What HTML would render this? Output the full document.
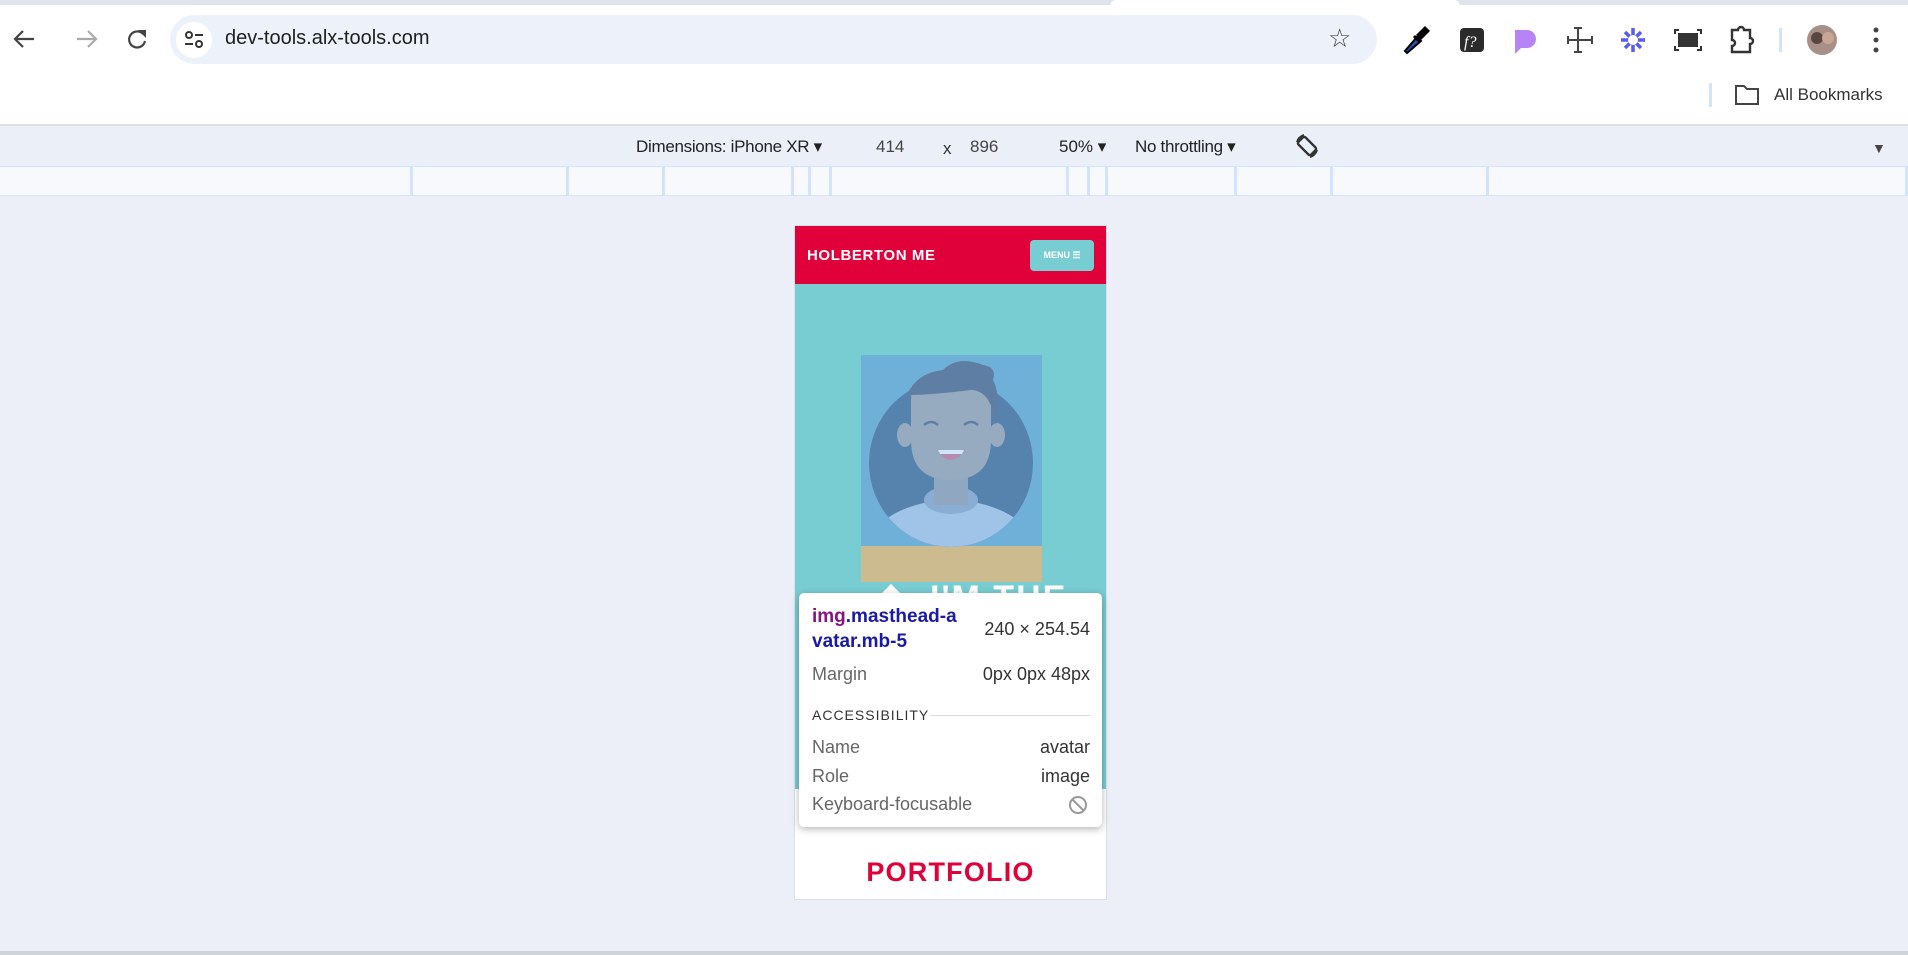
<!DOCTYPE html>
<html><head><meta charset="utf-8"><style>
*{margin:0;padding:0;box-sizing:border-box}
body{width:1908px;height:955px;background:#eceff7;font-family:"Liberation Sans",sans-serif;position:relative;overflow:hidden}
.abs{position:absolute}
</style></head><body>
<div class="abs" style="left:0;top:0;width:1908px;height:5px;background:#dfe3eb"></div>
<div class="abs" style="left:1110px;top:0;width:350px;height:6px;background:#fff;border-radius:8px 8px 0 0"></div>
<div class="abs" style="left:0;top:5px;width:1908px;height:120px;background:#fff"></div>
<svg class="abs" style="left:10px;top:26px" width="150" height="28" viewBox="0 0 150 28">
<path d="M24 13H6M13 5l-8 8 8 8" stroke="#444" stroke-width="2.2" fill="none"/>
<path d="M67 13h18M78 5l8 8-8 8" stroke="#aaa" stroke-width="2.2" fill="none"/>
<path d="M133 8a8 8 0 1 0 2 7" stroke="#444" stroke-width="2.2" fill="none"/><path d="M128 4h8v8z" fill="#444"/>
</svg>
<div class="abs" style="left:170px;top:15px;width:1207px;height:49px;background:#edf2fa;border-radius:25px"></div>
<div class="abs" style="left:176px;top:22px;width:36px;height:36px;background:#fff;border-radius:50%"></div>
<svg class="abs" style="left:184px;top:30px" width="20" height="20" viewBox="0 0 20 20"><circle cx="5" cy="5" r="3" stroke="#333" stroke-width="2" fill="none"/><path d="M11 5h8M1 14h8" stroke="#333" stroke-width="2"/><circle cx="15" cy="14" r="3" stroke="#333" stroke-width="2" fill="none"/></svg>
<div class="abs" style="left:225px;top:27px;font-size:20px;color:#1f1f1f">dev-tools.alx-tools.com</div>
<div class="abs" style="left:1328px;top:23px;font-size:26px;color:#444">☆</div>
<svg class="abs" style="left:1400px;top:24px" width="500" height="32" viewBox="0 0 500 32">
<path d="M7 29l-2-2 12-14 4 4z" fill="#2a4fb0" stroke="#000" stroke-width="2"/><path d="M16 11l9-9 5 5-9 9z" fill="#000"/><path d="M14 12l6 6" stroke="#000" stroke-width="3"/>
<rect x="60" y="4" width="24" height="24" rx="4" fill="#2b2b2b"/><text x="64" y="23" fill="#fff" font-size="16" font-style="italic" font-family="Liberation Serif">f?</text>
<path d="M115 6h12a9 9 0 0 1 0 18h-6l-6 6z" fill="#b784f5"/>
<path d="M178 4v24M168 16h24M174 4h8M174 28h8M168 12v8M192 12v8" stroke="#444" stroke-width="2" fill="none"/>
<g stroke="#5a5af0" stroke-width="3.5"><path d="M233 4v24M221 16h24M225 8l16 16M241 8l-16 16"/></g><circle cx="233" cy="16" r="5" fill="#fff"/>
<rect x="278" y="9" width="20" height="14" fill="#333"/><path d="M275 10V6h4M301 10V6h-4M275 22v4h4M301 22v4h-4" stroke="#333" stroke-width="2" fill="none"/>
<path d="M332 6h6a3 3 0 0 1 6 0h6v8a3 3 0 0 1 0 6v8h-18v-6a3 3 0 0 0 0-6z" stroke="#333" stroke-width="2.4" fill="none"/>
<rect x="379" y="4" width="3" height="24" fill="#d3e3fd"/>
<circle cx="422" cy="16" r="15" fill="#a89088"/><circle cx="417" cy="14" r="6" fill="#5a4640"/><circle cx="428" cy="14" r="6" fill="#c9a595"/>
<circle cx="476" cy="6" r="2.5" fill="#444"/><circle cx="476" cy="16" r="2.5" fill="#444"/><circle cx="476" cy="26" r="2.5" fill="#444"/>
</svg>
<div class="abs" style="left:1709px;top:83px;width:3px;height:24px;background:#d3e3fd"></div>
<svg class="abs" style="left:1734px;top:84px" width="26" height="22" viewBox="0 0 26 22"><path d="M2 2h8l3 3h11v15H2z" stroke="#444" stroke-width="2" fill="none"/></svg>
<div class="abs" style="left:1774px;top:85px;font-size:17px;color:#333">All Bookmarks</div>
<div class="abs" style="left:0;top:124px;width:1908px;height:2px;background:#e0e0dc"></div>
<div class="abs" style="left:0;top:126px;width:1908px;height:40px;background:#ebeff8"></div>
<div class="abs" style="left:636px;top:137px;font-size:17px;color:#222;letter-spacing:-0.3px">Dimensions: iPhone XR ▾</div>
<div class="abs" style="left:876px;top:137px;font-size:17px;color:#444">414</div>
<div class="abs" style="left:943px;top:139px;font-size:17px;color:#333">x</div>
<div class="abs" style="left:970px;top:137px;font-size:17px;color:#444">896</div>
<div class="abs" style="left:1059px;top:137px;font-size:17px;color:#222">50% ▾</div>
<div class="abs" style="left:1135px;top:137px;font-size:17px;color:#222;letter-spacing:-0.3px">No throttling ▾</div>
<svg class="abs" style="left:1293px;top:132px" width="28" height="28" viewBox="0 0 28 28"><g transform="rotate(-45 14 14)"><rect x="9" y="5" width="10" height="18" rx="2" stroke="#333" stroke-width="2.4" fill="none"/></g><path d="M4 10a11 11 0 0 1 7-7M24 18a11 11 0 0 1-7 7" stroke="#333" stroke-width="2" fill="none"/></svg>
<div class="abs" style="left:1872px;top:140px;font-size:14px;color:#444">▼</div>
<div class="abs" style="left:0;top:166px;width:1908px;height:30px;background:#f8f9fd;border-top:1px solid #d3e3fd;border-bottom:1px solid #d3e3fd"></div>
<div class="abs" style="left:410px;top:166px;width:3px;height:30px;background:#d3e3fd"></div>
<div class="abs" style="left:566px;top:166px;width:3px;height:30px;background:#d3e3fd"></div>
<div class="abs" style="left:662px;top:166px;width:3px;height:30px;background:#d3e3fd"></div>
<div class="abs" style="left:791px;top:166px;width:3px;height:30px;background:#d3e3fd"></div>
<div class="abs" style="left:808px;top:166px;width:3px;height:30px;background:#d3e3fd"></div>
<div class="abs" style="left:829px;top:166px;width:3px;height:30px;background:#d3e3fd"></div>
<div class="abs" style="left:1066px;top:166px;width:3px;height:30px;background:#d3e3fd"></div>
<div class="abs" style="left:1087px;top:166px;width:3px;height:30px;background:#d3e3fd"></div>
<div class="abs" style="left:1105px;top:166px;width:3px;height:30px;background:#d3e3fd"></div>
<div class="abs" style="left:1234px;top:166px;width:3px;height:30px;background:#d3e3fd"></div>
<div class="abs" style="left:1330px;top:166px;width:3px;height:30px;background:#d3e3fd"></div>
<div class="abs" style="left:1486px;top:166px;width:3px;height:30px;background:#d3e3fd"></div>
<div class="abs" style="left:1905px;top:166px;width:3px;height:30px;background:#d3e3fd"></div>
<div class="abs" style="left:0;top:951px;width:1908px;height:4px;background:#cfd3da"></div>
<div class="abs" style="left:794px;top:225px;width:313px;height:675px;background:#fff;border:1px solid #dde0e6"></div>
<div class="abs" style="left:795px;top:226px;width:311px;height:58px;background:#e0003a"></div>
<div class="abs" style="left:807px;top:247px;font-size:15px;font-weight:bold;color:#fff;letter-spacing:0.6px">HOLBERTON ME</div>
<div class="abs" style="left:1030px;top:240px;width:64px;height:31px;background:#78cdd2;border-radius:4px;color:#fff;font-size:9px;font-weight:bold;text-align:center;line-height:31px">MENU ☰</div>
<div class="abs" style="left:795px;top:284px;width:311px;height:505px;background:#78cdd2"></div>
<svg class="abs" style="left:861px;top:355px" width="181" height="227" viewBox="0 0 181 227">
<rect width="181" height="191" fill="#6fb0d8"/>
<rect y="191" width="181" height="36" fill="#cbbb8f"/>
<clipPath id="c"><ellipse cx="90" cy="108" rx="82" ry="84"/></clipPath>
<ellipse cx="90" cy="108" rx="82" ry="84" fill="#5683ad"/>
<g clip-path="url(#c)">
<ellipse cx="90" cy="215" rx="95" ry="70" fill="#a0c3e8"/>
<ellipse cx="90" cy="145" rx="27" ry="14" fill="#8aaed3"/>
</g>
<rect x="73" y="120" width="34" height="30" fill="#8fa7c0"/>
<ellipse cx="44" cy="80" rx="8" ry="12" fill="#96aac0"/><ellipse cx="136" cy="80" rx="8" ry="12" fill="#96aac0"/>
<path d="M50 45q0-30 40-30t40 30v40q0 40-40 40t-40-40z" fill="#96aac0"/>
<path d="M42 70q-2-50 40-55q15-15 40-5q14 2 10 15q8 15 3 45q-5-35-25-35q-40 5-62 5q-8 10-6 30z" fill="#5f7ea3"/>
<path d="M63 70q7-6 14 0M103 70q7-6 14 0" stroke="#5f7ea3" stroke-width="2.5" fill="none"/>
<path d="M76 95q14 20 28 0z" fill="#b78bb0"/><path d="M77 95h26l-2 4h-22z" fill="#cfe6f6"/>
</svg>
<div class="abs" style="left:930px;top:582px;font-size:34px;font-weight:bold;color:#fff;letter-spacing:2px;height:12px;overflow:hidden;line-height:32px">I'M THE</div>
<div class="abs" style="left:881px;top:584px;width:0;height:0;border-left:10px solid transparent;border-right:10px solid transparent;border-bottom:10px solid #fff"></div>
<div class="abs" style="left:799px;top:593px;width:303px;height:234px;background:#fff;border-radius:5px;box-shadow:0 2px 8px rgba(0,0,0,.3)"></div>
<div class="abs" style="left:812px;top:604px;font-size:19px;font-weight:bold;line-height:25px;color:#1a1aa6"><span style="color:#881280">img</span>.masthead-a<br>vatar.mb-5</div>
<div class="abs" style="right:818px;top:619px;font-size:18px;color:#333">240 × 254.54</div>
<div class="abs" style="left:812px;top:664px;font-size:18px;color:#666">Margin</div>
<div class="abs" style="right:818px;top:664px;font-size:18px;color:#333">0px 0px 48px</div>
<div class="abs" style="left:812px;top:707px;font-size:14px;color:#333;letter-spacing:1px">ACCESSIBILITY</div>
<div class="abs" style="left:930px;top:715px;width:160px;height:1px;background:#ddd"></div>
<div class="abs" style="left:812px;top:737px;font-size:18px;color:#666">Name</div>
<div class="abs" style="right:818px;top:737px;font-size:18px;color:#333">avatar</div>
<div class="abs" style="left:812px;top:766px;font-size:18px;color:#666">Role</div>
<div class="abs" style="right:818px;top:766px;font-size:18px;color:#333">image</div>
<div class="abs" style="left:812px;top:794px;font-size:18px;color:#666">Keyboard-focusable</div>
<svg class="abs" style="left:1068px;top:795px" width="20" height="20" viewBox="0 0 20 20"><circle cx="10" cy="10" r="8" stroke="#999" stroke-width="2" fill="none"/><path d="M4.5 4.5l11 11" stroke="#999" stroke-width="2"/></svg>
<div class="abs" style="left:795px;top:857px;width:311px;text-align:center;font-size:27px;font-weight:bold;color:#e0003a;letter-spacing:1.2px">PORTFOLIO</div>
</body></html>
